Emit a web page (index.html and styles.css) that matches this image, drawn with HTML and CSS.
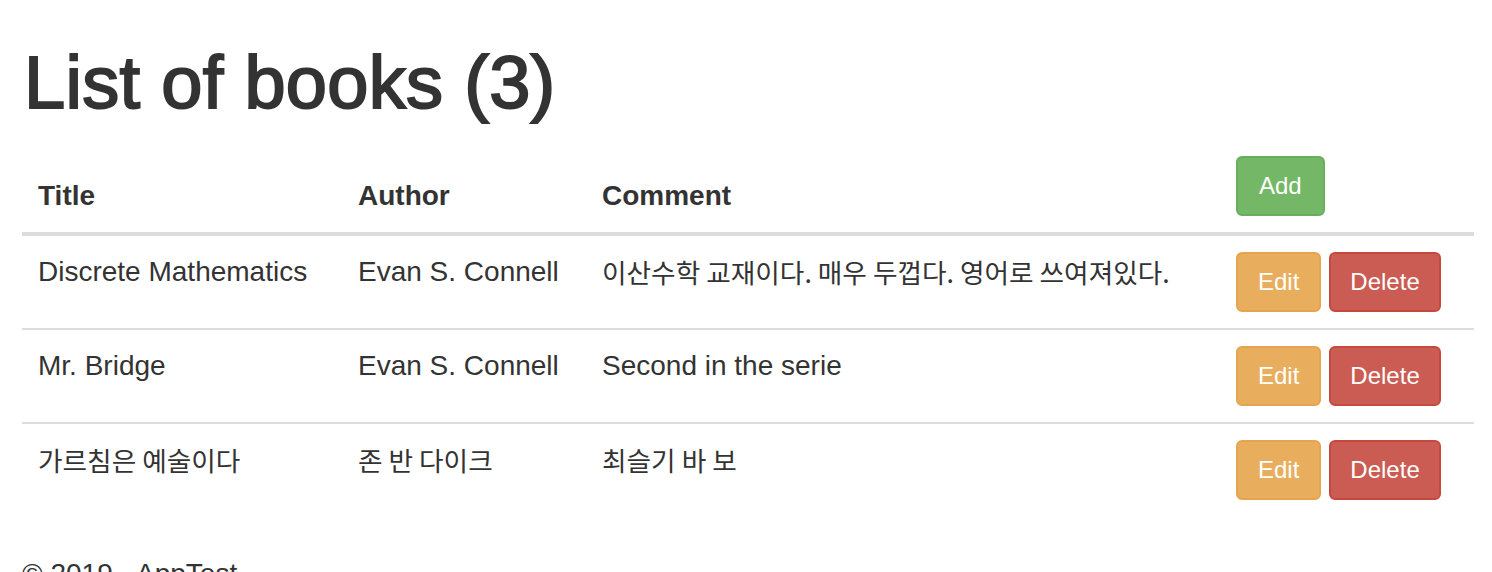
FILE: index.html
```html
<!DOCTYPE html>
<html lang="en">
<head>
<meta charset="utf-8">
<title>List of books</title>
<link rel="stylesheet" href="styles.css">
</head>
<body>
<div class="container">
  <h1 class="page-title">List of books (3)</h1>
  <table class="books">
    <colgroup>
      <col class="c-title"><col class="c-author"><col class="c-comment"><col class="c-actions">
    </colgroup>
    <thead>
      <tr>
        <th>Title</th>
        <th>Author</th>
        <th>Comment</th>
        <th><a class="btn btn-add">Add</a></th>
      </tr>
    </thead>
    <tbody>
      <tr>
        <td>Discrete Mathematics</td>
        <td>Evan S. Connell</td>
        <td><span class="ko">이산수학 교재이다. 매우 두껍다. 영어로 쓰여져있다.</span></td>
        <td class="actions"><a class="btn btn-edit">Edit</a><a class="btn btn-del">Delete</a></td>
      </tr>
      <tr>
        <td>Mr. Bridge</td>
        <td>Evan S. Connell</td>
        <td>Second in the serie</td>
        <td class="actions"><a class="btn btn-edit">Edit</a><a class="btn btn-del">Delete</a></td>
      </tr>
      <tr>
        <td><span class="ko">가르침은 예술이다</span></td>
        <td><span class="ko">존 반 다이크</span></td>
        <td><span class="ko">최슬기 바 보</span></td>
        <td class="actions"><a class="btn btn-edit">Edit</a><a class="btn btn-del">Delete</a></td>
      </tr>
    </tbody>
  </table>
  <footer class="footer">
    <p>&copy; 2019 - AppTest</p>
  </footer>
</div>
</body>
</html>
```
FILE: styles.css
```css
html, body {
  margin: 0;
  padding: 0;
  background: #ffffff;
}
body {
  font-family: "Liberation Sans", "Noto Sans CJK KR", Arial, sans-serif;
  font-size: 28px;
  line-height: 40px;
  color: #333333;
}
.container {
  padding: 43px 18px 0 22px;
}
.page-title {
  margin: 0 0 18px 0;
  font-size: 74px;
  line-height: 79px;
  font-weight: 400;
  -webkit-text-stroke: 2px #333333;
  color: #333333;
  padding-left: 2px;
  letter-spacing: 0.3px;
}
.books {
  width: 100%;
  border-collapse: collapse;
  table-layout: fixed;
  margin-bottom: 38px;
}
.c-title { width: 320px; }
.c-author { width: 244px; }
.c-comment { width: 634px; }
.c-actions { width: 254px; }
.books th, .books td {
  padding: 16px;
  text-align: left;
  white-space: nowrap;
}
.books th {
  vertical-align: bottom;
  font-weight: 700;
  border-bottom: 4px solid #dcdcdc;
}
.books td {
  vertical-align: top;
  border-top: 2px solid #dcdcdc;
}
.books tbody tr:first-child td {
  border-top: 0;
}
.ko {
  font-family: "Noto Sans CJK KR", "Liberation Sans", sans-serif;
  font-size: 26.7px;
}
.btn {
  display: inline-block;
  box-sizing: border-box;
  height: 60px;
  padding: 10px 20px;
  font-size: 24px;
  line-height: 36px;
  border: 2px solid transparent;
  border-radius: 6px;
  color: #ffffff;
  font-weight: 400;
  vertical-align: top;
}
.btn-add {
  padding-left: 21px;
  padding-right: 21px;
  background: #74b767;
  border-color: #68ae5c;
}
.btn-edit {
  background: #e8ae5e;
  border-color: #e6a44f;
  margin-right: 8px;
}
.btn-del {
  background: #cb5c54;
  border-color: #c5493f;
  padding-left: 19px;
  padding-right: 19px;
}
.footer p {
  margin: 0;
}
```
